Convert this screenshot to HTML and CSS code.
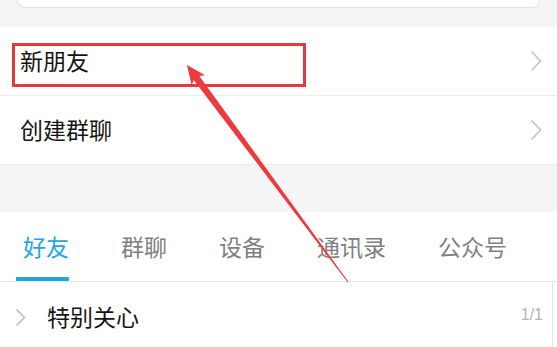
FILE: index.html
```html
<!DOCTYPE html>
<html lang="zh">
<head>
<meta charset="utf-8">
<link rel="stylesheet" href="styles.css">
</head>
<body>
<div class="page">
  <div class="search-band"><div class="search-box"></div></div>
  <div class="row">
    <span class="row-label">新朋友</span>
    <svg class="chev" width="12" height="22" viewBox="0 0 12 22"><path d="M1.5 1.5 L10.5 11 L1.5 20.5" fill="none" stroke="#c6c6c9" stroke-width="1.8"/></svg>
  </div>
  <div class="row">
    <span class="row-label">创建群聊</span>
    <svg class="chev" width="12" height="22" viewBox="0 0 12 22"><path d="M1.5 1.5 L10.5 11 L1.5 20.5" fill="none" stroke="#c6c6c9" stroke-width="1.8"/></svg>
  </div>
  <div class="gap-band"></div>
  <div class="tabs">
    <span class="tab active">好友</span>
    <span class="tab">群聊</span>
    <span class="tab">设备</span>
    <span class="tab">通讯录</span>
    <span class="tab">公众号</span>
  </div>
  <div class="group">
    <svg class="group-chev" width="11" height="19" viewBox="0 0 11 19"><path d="M1.5 1.5 L9.5 9.5 L1.5 17.5" fill="none" stroke="#c6c6c9" stroke-width="1.8"/></svg>
    <span class="group-label">特别关心</span>
    <span class="group-count">1/1</span>
  </div>
  <div class="highlight"></div>
  <svg class="arrow" width="557" height="347" viewBox="0 0 557 347">
    <polygon points="187,65 205,75.3 199.3,75.9 348.4,281.7 347.6,282.3 193.7,80.1 191.7,85.4" fill="#ee3a3c"/>
  </svg>
</div>
</body>
</html>
```
FILE: styles.css
```css
* { box-sizing: border-box; }
html, body { margin: 0; padding: 0; background: #fff; }
body {
  width: 557px;
  height: 347px;
  overflow: hidden;
  font-family: "Noto Sans CJK SC", "Noto Sans", sans-serif;
}
.page { position: relative; width: 557px; height: 347px; }
.search-band {
  height: 27px;
  background: #f5f5f7;
  padding: 0 17px;
}
.search-box {
  height: 8px;
  background: #fff;
  border: 1px solid #e1e1e4;
  border-top: none;
  border-radius: 0 0 9px 9px;
}
.row {
  height: 69px;
  border-bottom: 1px solid #ececee;
  display: flex;
  align-items: center;
  justify-content: space-between;
  padding: 0 15px 0 20px;
}
.row-label {
  font-size: 23px;
  color: #141414;
  line-height: 1;
  margin-top: -2px;
}
.gap-band {
  height: 47px;
  background: #f5f5f7;
}
.tabs {
  height: 70px;
  border-bottom: 1px solid #e8e8ea;
  display: flex;
  padding-left: 23px;
  gap: 52px;
}
.tab {
  position: relative;
  display: flex;
  align-items: center;
  font-size: 23px;
  color: #808080;
  line-height: 1;
}
.tab.active { color: #22a5e3; }
.tab.active::after {
  content: "";
  position: absolute;
  left: -7px;
  width: 53px;
  bottom: 0;
  height: 4px;
  background: #22a5e3;
  border-radius: 1px;
}
.group {
  height: 70px;
  margin-right: 4px;
  border-right: 1px solid #e6e6e8;
  display: flex;
  align-items: center;
  padding: 0 9px 0 15px;
}
.group-chev { flex: none; }
.group-label {
  margin-left: 21px;
  font-size: 23px;
  color: #141414;
  line-height: 1;
  margin-top: -2px;
}
.group-count {
  margin-left: auto;
  font-family: "Liberation Sans", sans-serif;
  font-size: 16px;
  color: #b4b4b4;
  margin-top: -4px;
}
.highlight {
  position: absolute;
  left: 12px;
  top: 43px;
  width: 294px;
  height: 44px;
  border: 3px solid #e23a3e;
}
.arrow {
  position: absolute;
  left: 0;
  top: 0;
}
```
